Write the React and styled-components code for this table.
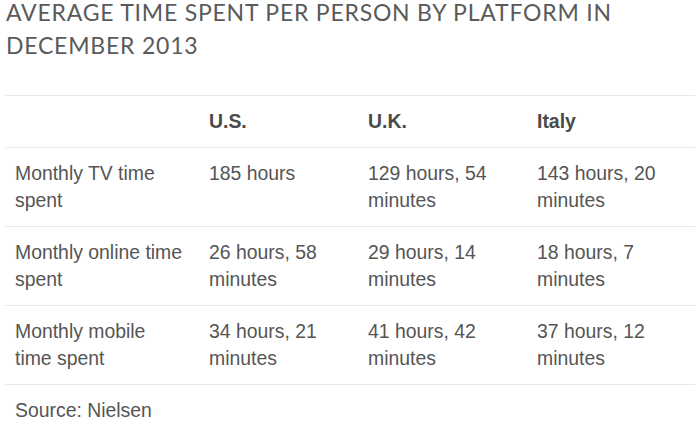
import React from 'react';
import styled, { createGlobalStyle } from 'styled-components';

const GlobalStyle = createGlobalStyle`
  html, body {
    margin: 0;
    padding: 0;
    background: #ffffff;
  }
`;

const Page = styled.div`
  width: 700px;
  height: 438px;
  overflow: hidden;
  padding: 0 5px;
  box-sizing: border-box;
  font-family: 'Liberation Sans', Arial, sans-serif;
  color: #555555;
`;

const Title = styled.h2`
  margin: -4px 0 0 1px;
  font-family: Lato, 'Open Sans', sans-serif;
  font-weight: 400;
  font-size: 23px;
  letter-spacing: 0.78px;
  line-height: 33px;
  color: #5a5a5a;
  text-transform: uppercase;
`;

const Table = styled.div`
  margin-top: 33px;
  border-top: 1px solid #e8e8e8;
`;

const Row = styled.div`
  display: grid;
  grid-template-columns: 194px 159px 169px 1fr;
  border-bottom: 1px solid ${p => (p.$last ? 'transparent' : '#e8e8e8')};
  padding: 12px 0;
`;

const Cell = styled.div`
  padding: 0 10px;
  font-size: 19.4px;
  line-height: 27px;
  font-weight: ${p => (p.$head ? 700 : 400)};
  color: ${p => (p.$head ? '#4a4a4a' : '#555555')};

  &:first-child {
    padding-right: 16px;
  }
`;

const rows = [
  ['Monthly TV time spent', '185 hours', '129 hours, 54 minutes', '143 hours, 20 minutes'],
  ['Monthly online time spent', '26 hours, 58 minutes', '29 hours, 14 minutes', '18 hours, 7 minutes'],
  ['Monthly mobile time spent', '34 hours, 21 minutes', '41 hours, 42 minutes', '37 hours, 12 minutes'],
];

export default function App() {
  return (
    <Page>
      <GlobalStyle />
      <Title>Average time spent per person by platform in December 2013</Title>
      <Table>
        <Row>
          <Cell $head />
          <Cell $head>U.S.</Cell>
          <Cell $head>U.K.</Cell>
          <Cell $head>Italy</Cell>
        </Row>
        {rows.map(r => (
          <Row key={r[0]}>
            {r.map((c, i) => (
              <Cell key={i}>{c}</Cell>
            ))}
          </Row>
        ))}
        <Row $last>
          <Cell>Source: Nielsen</Cell>
        </Row>
      </Table>
    </Page>
  );
}
